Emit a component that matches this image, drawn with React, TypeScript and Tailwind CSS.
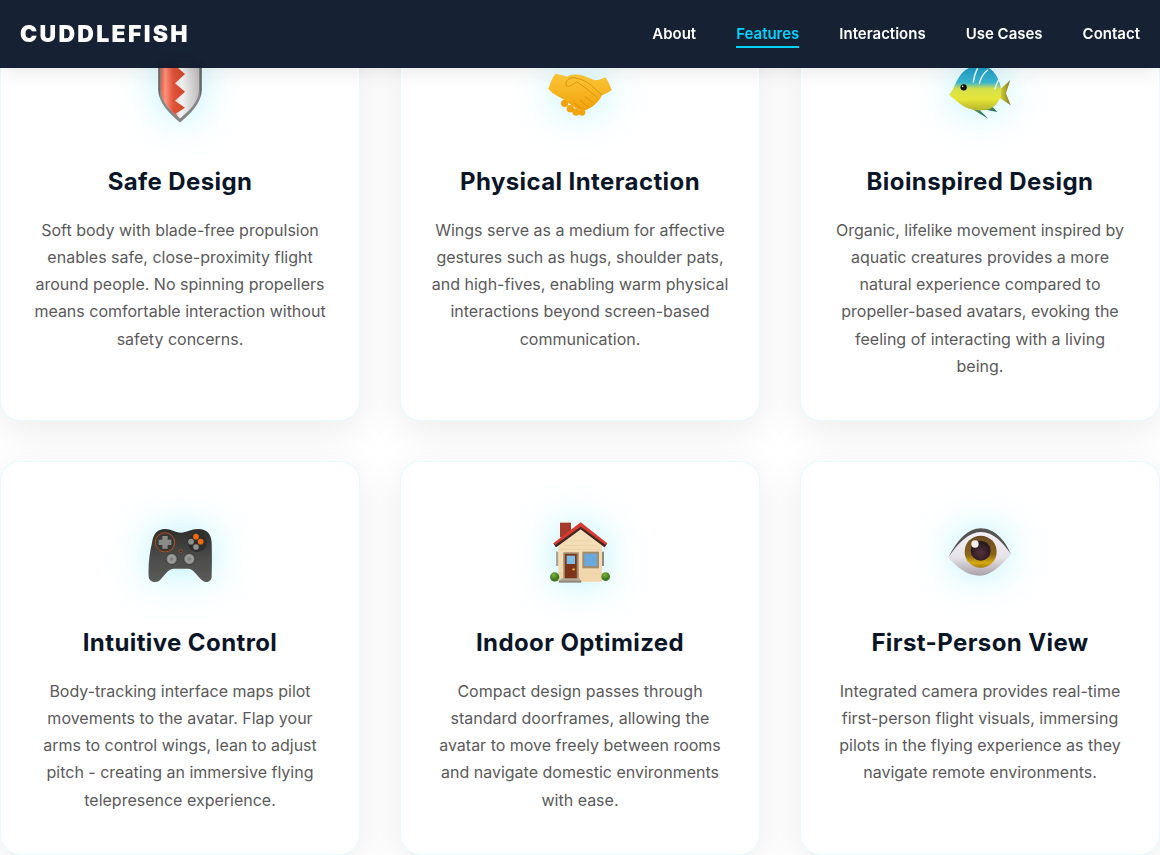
import React from 'react';

const Z = ({ x, y, children }: { x: number; y: number; children: React.ReactNode }) => (
  <g transform={`translate(${x} ${y}) scale(0.3333)`}>{children}</g>
);

const iconClass = 'w-[80px] h-[80px] drop-shadow-[0_0_20px_rgba(0,212,255,0.3)]';

function ShieldIcon() {
  return (
    <svg viewBox="0 0 80 80" className={iconClass}>
      <defs>
        <linearGradient id="shRim" x1="0" x2="1" y1="0" y2="0">
          <stop offset="0" stopColor="#4f4f4f" />
          <stop offset="0.05" stopColor="#858585" />
          <stop offset="0.95" stopColor="#858585" />
          <stop offset="1" stopColor="#474747" />
        </linearGradient>
        <linearGradient id="shRed" x1="0" x2="1" y1="0" y2="0">
          <stop offset="0" stopColor="#e85f42" />
          <stop offset="0.18" stopColor="#ff927b" />
          <stop offset="0.5" stopColor="#e2543a" />
          <stop offset="1" stopColor="#cf4527" />
        </linearGradient>
        <linearGradient id="shGray" x1="0" x2="1" y1="0" y2="0">
          <stop offset="0" stopColor="#b9b9b9" />
          <stop offset="0.55" stopColor="#f1f1f1" />
          <stop offset="1" stopColor="#bdbdbd" />
        </linearGradient>
      </defs>
      <path d="M18.300 9C26 6 54 6 61.700 9V37C61.700 50 50 61 40 69.500C30 61 18.300 50 18.300 37Z" fill="url(#shRim)" />
      <path d="M21 11C28 9 52 9 59 11V37C59 49 49 58 40 65.500C31 58 21 49 21 37Z" fill="url(#shGray)" />
      <path d="M21 11C26 9.500 32 9.300 38.300 9.300V15.300L45 21L35 30.300L45 38.700L35 47.700L45 54.700L36 60.500L38.500 64.300C31 58 21 49 21 37Z" fill="url(#shRed)" />
    </svg>
  );
}

function HandshakeIcon() {
  return (
    <svg viewBox="0 0 80 80" className={iconClass}>
      <defs>
        <linearGradient id="hsFill" x1="0" x2="0" y1="0" y2="1">
          <stop offset="0" stopColor="#ffc93a" />
          <stop offset="1" stopColor="#f0a00a" />
        </linearGradient>
      </defs>
      <Z x={-10} y={7}>
        <circle cx="104" cy="130" r="11" fill="#f0a00a" />
        <circle cx="121" cy="146" r="11" fill="#f2a50e" />
        <circle cx="138" cy="156" r="11" fill="#f2a50e" />
        <circle cx="156" cy="157" r="10" fill="#f2a50e" />
        <path
          d="M76 42C88 42 100 47 112 50C122 41 140 42 160 47C175 51 186 58 197 61C208 60 218 56 226 52C234 62 240 76 245 90C236 97 226 102 216 106C208 124 190 142 168 150C150 154 130 140 112 126C104 118 96 116 86 110C74 103 62 96 55 86C60 70 66 55 76 42Z"
          fill="url(#hsFill)"
        />
        <path d="M108 76C106 58 122 48 146 56C160 60 170 66 182 74L216 106" fill="none" stroke="#d98f05" strokeWidth="2.500" />
        <path d="M108 76C118 84 128 72 140 66C160 78 186 98 204 116" fill="none" stroke="#d98f05" strokeWidth="2.500" />
        <path d="M165 110L192 130M150 120L176 142M132 128L154 148" fill="none" stroke="#d98f05" strokeWidth="2.500" />
      </Z>
    </svg>
  );
}

function FishIcon() {
  return (
    <svg viewBox="0 0 80 80" className={iconClass}>
      <defs>
        <linearGradient id="fsBody" x1="0" x2="0" y1="0" y2="1">
          <stop offset="0" stopColor="#1b9cc6" />
          <stop offset="0.38" stopColor="#3ab6d2" />
          <stop offset="0.52" stopColor="#d4e04a" />
          <stop offset="0.75" stopColor="#e6e63a" />
          <stop offset="1" stopColor="#b7b52a" />
        </linearGradient>
        <linearGradient id="fsTail" x1="0" x2="1" y1="0" y2="0">
          <stop offset="0" stopColor="#e4df3a" />
          <stop offset="1" stopColor="#7f7a22" />
        </linearGradient>
        <linearGradient id="fsFin" x1="0" x2="1" y1="0" y2="1">
          <stop offset="0" stopColor="#a4b13a" />
          <stop offset="0.6" stopColor="#2f7d5a" />
          <stop offset="1" stopColor="#215a49" />
        </linearGradient>
      </defs>
      <Z x={-20} y={7}>
        <path d="M145 140L205 176L175 146Z" fill="url(#fsFin)" />
        <path d="M190 148L232 156L215 138Z" fill="url(#fsFin)" />
        <path d="M236 92L271 60L258 100L272 136L236 112Z" fill="url(#fsTail)" />
        <path d="M87 103C98 95 105 70 118 50C130 30 155 16 180 16C212 16 234 45 242 80C248 108 236 134 210 146C182 156 140 150 118 130C106 120 94 112 87 103Z" fill="url(#fsBody)" />
        <path d="M160 66C162 50 166 38 172 26M178 70C182 54 190 40 203 30M225 86C228 76 232 66 238 56" fill="none" stroke="#e8f6f6" strokeWidth="4.500" strokeLinecap="round" />
        <circle cx="131" cy="82" r="9.500" fill="#111" />
        <circle cx="128" cy="79" r="2.500" fill="#ddd" />
      </Z>
    </svg>
  );
}

function GamepadIcon() {
  return (
    <svg viewBox="0 0 80 80" className={iconClass}>
      <defs>
        <linearGradient id="gpBody" x1="0" x2="0" y1="0" y2="1">
          <stop offset="0" stopColor="#2d2e2c" />
          <stop offset="0.5" stopColor="#4a4b48" />
          <stop offset="1" stopColor="#5b5c58" />
        </linearGradient>
        <radialGradient id="gpStick">
          <stop offset="0" stopColor="#777" />
          <stop offset="0.6" stopColor="#a2a2a0" />
          <stop offset="1" stopColor="#6b6b69" />
        </radialGradient>
      </defs>
      <Z x={-30} y={-4}>
        <path
          d="M165 57C185 57 195 68 212 68C230 68 242 57 265 57C290 57 304 72 305 98C306 130 306 170 305 200C304 215 288 220 278 212C262 200 252 178 236 176H190C172 178 162 200 148 212C136 220 118 216 116 200C114 170 118 130 126 98C130 72 142 57 165 57Z"
          fill="url(#gpBody)"
        />
        <circle cx="165" cy="97" r="29" fill="#383936" stroke="#b5521c" strokeWidth="3" />
        <path d="M157 78H173V89H184V105H173V116H157V105H146V89H157Z" fill="#8a8b88" />
        <circle cx="262" cy="97" r="29" fill="#2e2f2d" />
        <circle cx="258" cy="80" r="8.500" fill="#ed6a12" />
        <circle cx="272" cy="95" r="8.500" fill="#ed6a12" />
        <circle cx="243" cy="95" r="8.500" fill="#8f908d" />
        <circle cx="258" cy="111" r="8.500" fill="#8f908d" />
        <circle cx="185" cy="147" r="17" fill="url(#gpStick)" stroke="#333" strokeWidth="2" />
        <circle cx="238" cy="147" r="17" fill="url(#gpStick)" stroke="#333" strokeWidth="2" />
        <circle cx="212" cy="124" r="4.500" fill="#2e2f2d" stroke="#b5521c" strokeWidth="2.500" />
      </Z>
    </svg>
  );
}

function HouseIcon() {
  return (
    <svg viewBox="0 0 80 80" className={iconClass}>
      <defs>
        <linearGradient id="hoWall" x1="0" x2="0" y1="0" y2="1">
          <stop offset="0" stopColor="#f6e1bc" />
          <stop offset="1" stopColor="#f0d6aa" />
        </linearGradient>
        <radialGradient id="hoBush" cx="0.4" cy="0.3">
          <stop offset="0" stopColor="#79b23d" />
          <stop offset="1" stopColor="#3e7a20" />
        </radialGradient>
      </defs>
      <Z x={-20} y={-4}>
        <rect x="120" y="38" width="33" height="44" fill="#a83a2c" />
        <rect x="108" y="125" width="8" height="43" fill="#a9a49a" />
        <rect x="245" y="125" width="7" height="43" fill="#8f8a82" />
        <path d="M115 104L182 56L246 104V215H115Z" fill="url(#hoWall)" />
        <path d="M150 92H214M130 106H232M116 118H246M116 190H246" stroke="#e2c796" strokeWidth="1.500" />
        <path d="M100 100L182 37L262 100L254 112L182 58L108 112Z" fill="#d83a2e" />
        <path d="M100 100L108 112L182 58L254 112L262 100L256 104L182 50L106 104Z" fill="#3a2a28" />
        <rect x="130" y="127" width="46" height="80" fill="#a08468" />
        <rect x="135" y="132" width="35" height="75" fill="#7c351a" />
        <rect x="140" y="137" width="25" height="25" fill="#7cbde6" />
        <circle cx="161" cy="178" r="3.500" fill="#f2b02c" />
        <rect x="187" y="125" width="50" height="50" fill="#a68a6c" />
        <rect x="193" y="131" width="38" height="37" fill="#68a9de" />
        <rect x="122" y="205" width="58" height="6" fill="#b5aea0" />
        <rect x="117" y="211" width="67" height="7" fill="#8f887a" />
        <circle cx="104" cy="201" r="14" fill="url(#hoBush)" />
        <circle cx="257" cy="200" r="13" fill="url(#hoBush)" />
      </Z>
    </svg>
  );
}

function EyeIcon() {
  return (
    <svg viewBox="0 0 80 80" className={iconClass}>
      <defs>
        <linearGradient id="eySclera" x1="0" x2="0" y1="0" y2="1">
          <stop offset="0" stopColor="#f4f2f6" />
          <stop offset="0.6" stopColor="#e6e2e8" />
          <stop offset="1" stopColor="#a9a2a8" />
        </linearGradient>
        <linearGradient id="eyIris" x1="0" x2="0" y1="0" y2="1">
          <stop offset="0" stopColor="#6b4a26" />
          <stop offset="0.6" stopColor="#8c6418" />
          <stop offset="0.85" stopColor="#d5ab10" />
          <stop offset="1" stopColor="#a97c12" />
        </linearGradient>
        <radialGradient id="eyPupil" cx="0.5" cy="0.6">
          <stop offset="0" stopColor="#54323c" />
          <stop offset="1" stopColor="#2b1a20" />
        </radialGradient>
      </defs>
      <Z x={-20} y={-4}>
        <path d="M85 143C112 95 145 60 182 60C222 60 254 92 273 133C240 170 212 197 180 197C140 197 110 170 85 143Z" fill="url(#eySclera)" />
        <circle cx="182" cy="125" r="48" fill="url(#eyIris)" />
        <circle cx="182" cy="122" r="30" fill="url(#eyPupil)" />
        <circle cx="165" cy="102" r="11" fill="#f2eeee" />
        <path d="M85 143C112 88 145 55 182 55C222 55 254 88 273 133C250 98 220 66 182 66C148 66 112 100 85 143Z" fill="#565353" />
      </Z>
    </svg>
  );
}

const features = [
  {
    icon: <ShieldIcon />,
    title: 'Safe Design',
    text: 'Soft body with blade-free propulsion enables safe, close-proximity flight around people. No spinning propellers means comfortable interaction without safety concerns.',
  },
  {
    icon: <HandshakeIcon />,
    title: 'Physical Interaction',
    text: 'Wings serve as a medium for affective gestures such as hugs, shoulder pats, and high-fives, enabling warm physical interactions beyond screen-based communication.',
  },
  {
    icon: <FishIcon />,
    title: 'Bioinspired Design',
    text: 'Organic, lifelike movement inspired by aquatic creatures provides a more natural experience compared to propeller-based avatars, evoking the feeling of interacting with a living being.',
  },
  {
    icon: <GamepadIcon />,
    title: 'Intuitive Control',
    text: 'Body-tracking interface maps pilot movements to the avatar. Flap your arms to control wings, lean to adjust pitch - creating an immersive flying telepresence experience.',
  },
  {
    icon: <HouseIcon />,
    title: 'Indoor Optimized',
    text: 'Compact design passes through standard doorframes, allowing the avatar to move freely between rooms and navigate domestic environments with ease.',
  },
  {
    icon: <EyeIcon />,
    title: 'First-Person View',
    text: 'Integrated camera provides real-time first-person flight visuals, immersing pilots in the flying experience as they navigate remote environments.',
  },
];

const links = ['About', 'Features', 'Interactions', 'Use Cases', 'Contact'];

export default function App() {
  return (
    <div className="relative h-[855px] overflow-hidden bg-white font-['Inter',sans-serif]">
      <nav className="fixed top-0 left-0 right-0 z-10 h-[68px] px-5 flex items-center justify-between bg-[rgba(10,22,40,0.95)] backdrop-blur-[10px] shadow-[0_2px_20px_rgba(0,0,0,0.1)]">
        <div className="text-white text-[23px] font-black tracking-[2.3px]">CUDDLEFISH</div>
        <ul className="flex gap-10">
          {links.map((link) => (
            <li key={link}>
              <a className={`relative block text-[15px] font-[560] ${link === 'Features' ? 'text-[#00d4ff]' : 'text-white'}`}>
                {link}
                {link === 'Features' && <span className="absolute left-0 right-0 -bottom-[3px] h-0.5 bg-[#00d4ff]" />}
              </a>
            </li>
          ))}
        </ul>
      </nav>

      <main className="grid grid-cols-3 gap-10">
        {features.map((f) => (
          <div
            key={f.title}
            className="flex flex-col items-center text-center bg-white rounded-[20px] border border-[rgba(0,212,255,0.1)] px-[30px] pt-[52px] pb-[40.1px] shadow-[0_10px_40px_rgba(0,0,0,0.08)]"
          >
            {f.icon}
            <h3 className="mt-[31.2px] mb-[16.6px] text-[24px] leading-9 font-bold tracking-[0.4px] text-[#0a1628]">{f.title}</h3>
            <p className="text-base leading-[1.7] text-[#5a5a5a]">{f.text}</p>
          </div>
        ))}
      </main>
    </div>
  );
}
